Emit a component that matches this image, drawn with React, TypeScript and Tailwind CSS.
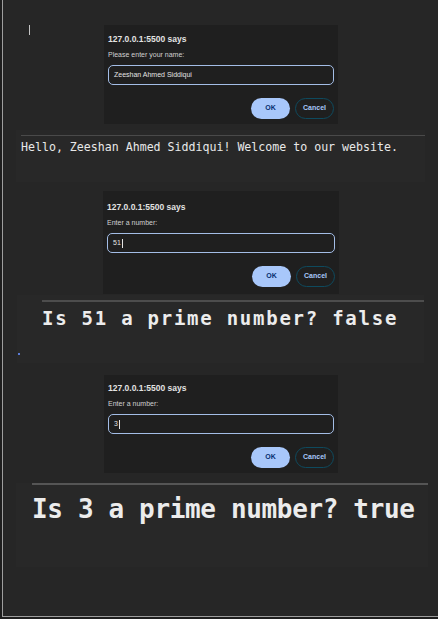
import React from 'react';

type PromptProps = {
  label: string;
  value: string;
  caret?: boolean;
  box: string;
};

const sans = { fontFamily: '"Liberation Sans", Arial, sans-serif' };
const mono = { fontFamily: '"DejaVu Sans Mono", "Liberation Mono", monospace' };

const PromptDialog: React.FC<PromptProps> = ({ label, value, caret, box }) => (
  <div className={`bg-[#1f1f1f] flex flex-col px-[4px] ${box}`} style={sans}>
    <div className="text-[8.5px] leading-[12px] font-bold text-[#e3e3e3]">127.0.0.1:5500 says</div>
    <div className="mt-[5px] text-[7px] leading-[10px] text-[#d0d0d0]">{label}</div>
    <div className="mt-[5px] h-[20px] rounded-[5px] border-[1.5px] border-[#a3bde6] flex items-center px-[5px]">
      <span className="text-[7px] text-[#e3e3e3]">{value}</span>
      {caret && <span className="ml-px w-px h-[9px] bg-[#e3e3e3]" />}
    </div>
    <div className="mt-[13px] flex justify-end gap-[5px]">
      <button className="w-[39px] h-[21px] rounded-full bg-[#a8c7fa] text-[7px] text-[#062e6f] font-bold">
        OK
      </button>
      <button className="w-[39px] h-[21px] rounded-full border border-[#0e4a5e] text-[7px] text-[#a8c7fa] font-bold">
        Cancel
      </button>
    </div>
  </div>
);

const App: React.FC = () => {
  return (
    <div className="w-[438px] h-[619px] bg-[#1e1e1e] overflow-hidden">
      <div className="ml-[2px] h-[617px] border-l border-b border-[#9e9e9e] bg-[#262626] flex flex-col">
        {/* first prompt */}
        <div className="mt-[25px] flex items-start">
          <span className="ml-[26px] w-px h-[10px] bg-[#c4c4c4]" />
          <PromptDialog box="ml-[74px] w-[234px] h-[99px] pt-[8px]" label="Please enter your name:" value="Zeeshan Ahmed Siddiqui" />
        </div>

        {/* greeting */}
        <div className="mt-[6px] ml-[13px] w-[409px] h-[52px] bg-[#282828] pt-[5px] flex flex-col">
          <div className="ml-[5px] h-px bg-[#4a4a4a]" />
          <div className="mt-[4px] pl-[5px] text-[11.6px] leading-[14px] text-[#e8e8e8] whitespace-nowrap" style={mono}>
            Hello, Zeeshan Ahmed Siddiqui! Welcome to our website.
          </div>
        </div>

        {/* second prompt */}
        <div className="mt-[9px] ml-[100px]">
          <PromptDialog box="w-[236px] h-[103px] pt-[10px]" label="Enter a number:" value="51" caret />
        </div>

        {/* result 51 */}
        <div className="mt-[1px] ml-[14px] w-[407px] h-[68px] bg-[#282828] pt-[5px] flex flex-col">
          <div className="ml-[25px] h-[1.5px] bg-[#4d4d4d]" />
          <div className="mt-[5px] pl-[25px] text-[19px] leading-[22px] tracking-[1.75px] font-bold text-[#ececec] whitespace-nowrap" style={mono}>
            Is 51 a prime number? false
          </div>
          <span className="mt-[24px] ml-px w-[2px] h-[2px] bg-[#5b7bd5]" />
        </div>

        {/* third prompt */}
        <div className="mt-[12px] ml-[101px]">
          <PromptDialog box="w-[234px] h-[98px] pt-[7px]" label="Enter a number:" value="3" caret />
        </div>

        {/* result 3 */}
        <div className="mt-[10px] ml-[13px] w-[412px] h-[84px] bg-[#282828] flex flex-col">
          <div className="ml-[16px] h-[2px] bg-[#555555]" />
          <div className="mt-[9px] pl-[16px] text-[26px] leading-[30px] tracking-[-0.35px] font-bold text-[#ececec] whitespace-nowrap" style={mono}>
            Is 3 a prime number? true
          </div>
        </div>
      </div>
    </div>
  );
};

export default App;
